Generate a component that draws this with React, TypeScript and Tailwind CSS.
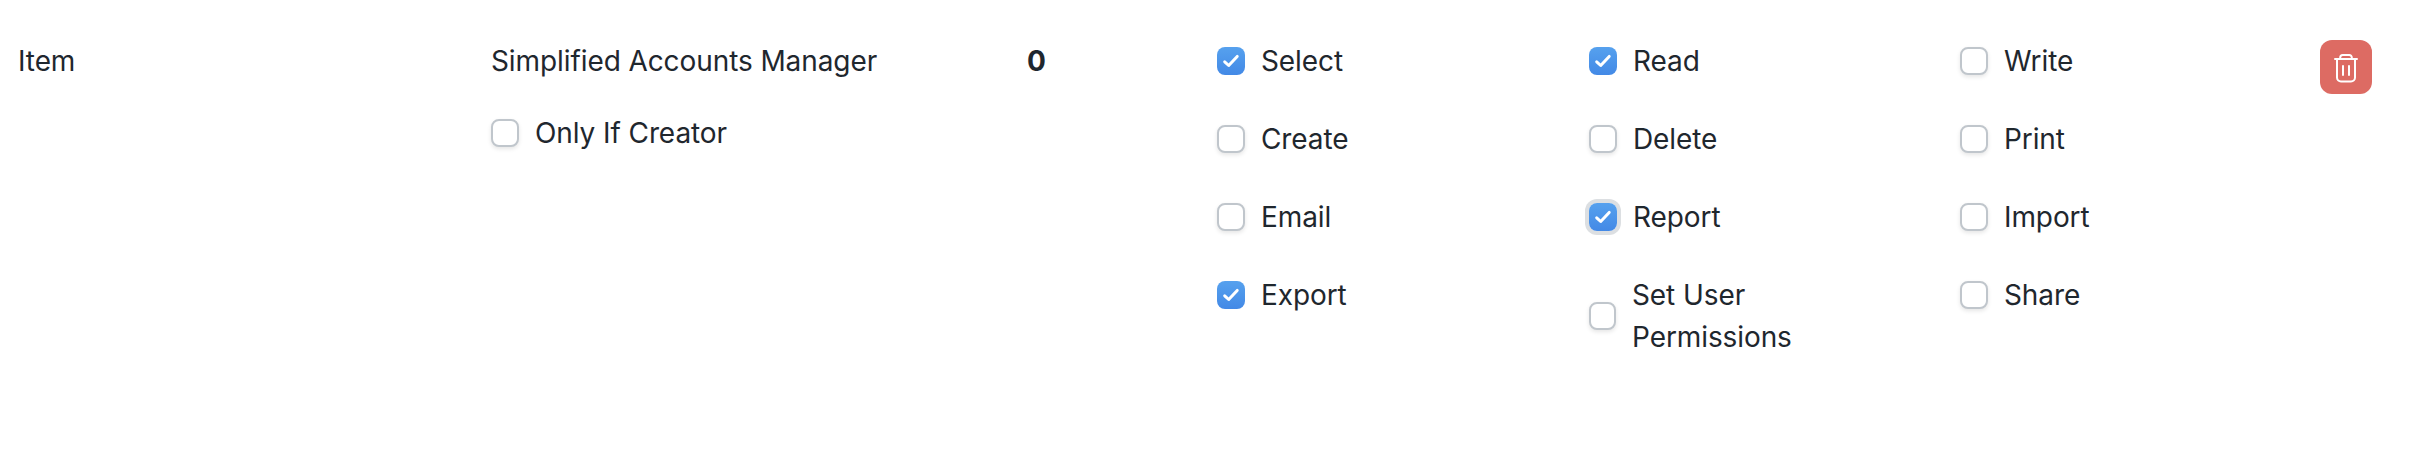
type Permission = { label: string; checked?: boolean; focused?: boolean };

const columns: Permission[][] = [
  [{ label: 'Select', checked: true }, { label: 'Create' }, { label: 'Email' }, { label: 'Export', checked: true }],
  [
    { label: 'Read', checked: true },
    { label: 'Delete' },
    { label: 'Report', checked: true, focused: true },
    { label: 'Set User Permissions' },
  ],
  [{ label: 'Write' }, { label: 'Print' }, { label: 'Import' }, { label: 'Share' }],
];

function Check({ label, checked, focused }: Permission) {
  const wraps = label.length > 16;
  return (
    <label className="flex items-center gap-4">
      <span
        role="checkbox"
        aria-checked={!!checked}
        className={
          'flex h-7 shrink-0 items-center justify-center rounded-lg ' +
          (wraps ? 'w-[27px] ' : 'w-7 ') +
          (checked
            ? 'bg-linear-to-b from-[#56a1ee] to-[#4389e6] '
            : 'border-2 border-[#c0c6cc] bg-white shadow-[0_2px_4px_rgba(0,0,0,0.1)] ') +
          (focused ? 'ring-4 ring-[#dcdfe2]' : '')
        }
      >
        {checked && (
          <svg viewBox="0 0 28 28" className="size-7" fill="none" stroke="white" strokeWidth="3" strokeLinecap="round" strokeLinejoin="round">
            <path d="M7.7 14.8 L11.7 18.5 L20.2 9.4" />
          </svg>
        )}
      </span>
      <span>{label}</span>
    </label>
  );
}

export default function App() {
  return (
    <div className="grid h-[458px] w-[2410px] grid-cols-[473px_536px_190px_1103px_52px] content-start items-start bg-white pt-10 pl-[18px] font-['Inter',sans-serif] text-[28px] leading-[42px] tracking-[-0.09px] text-[#1f272e]">
      <div>Item</div>
      <div className="flex flex-col gap-[30px]">
        <div>Simplified Accounts Manager</div>
        <Check label="Only If Creator" />
      </div>
      <div className="font-bold">0</div>
      <div className="grid grid-cols-[372px_371px_1fr]">
        {columns.map((items, i) => (
          <div key={i} className="flex w-52 flex-col gap-9">
            {items.map((item) => (
              <Check key={item.label} {...item} />
            ))}
          </div>
        ))}
      </div>
      <button aria-label="Remove" className="flex h-[54px] w-[52px] items-center justify-center rounded-xl bg-[#dd6b63]">
        <svg viewBox="0 0 52 54" className="h-[54px] w-[52px]" fill="none" stroke="white" strokeWidth="2" strokeLinecap="round" strokeLinejoin="round">
          <path d="M15 19H37M17 19V37.5a4 4 0 0 0 4 4H31a4 4 0 0 0 4-4V19M20.2 18.5V17.5a2.5 2.5 0 0 1 2.5-2.5H29.3a2.5 2.5 0 0 1 2.5 2.5V18.5M23 26V35M29 26V35" />
        </svg>
      </button>
    </div>
  );
}
